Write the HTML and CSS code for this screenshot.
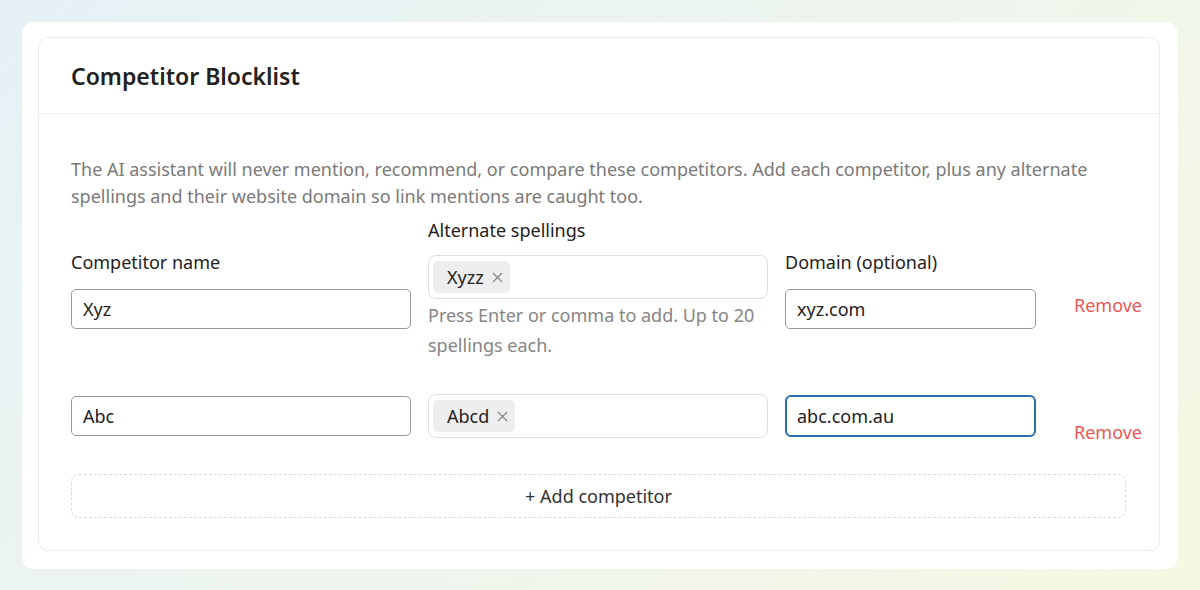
FILE: index.html
```html
<!DOCTYPE html>
<html lang="en">
<head>
    <meta charset="UTF-8">
    <meta name="viewport" content="width=device-width, initial-scale=1.0">
    <title>Competitor Blocklist</title>
    <link rel="stylesheet" href="styles.css">
</head>
<body>
    <div class="panel">
        <div class="card">
            <div class="card-header">
                <h2>Competitor Blocklist</h2>
            </div>

            <div class="card-body">
                <p class="intro">The AI assistant will never mention, recommend, or compare these competitors. Add each competitor, plus any alternate spellings and their website domain so link mentions are caught too.</p>

                <!-- Competitor rows -->
                <div class="comp-row">
                    <div class="field name-field">
                        <label>Competitor name</label>
                        <input class="text-input" type="text" value="Xyz">
                    </div>
                    <div class="field spell-field">
                        <label>Alternate spellings</label>
                        <div class="tag-box">
                            <span class="tag">Xyzz
                                <svg class="tag-x" width="11" height="11" viewBox="0 0 11 11"><path d="M1 1L10 10M10 1L1 10"/></svg>
                            </span>
                        </div>
                        <div class="hint">Press Enter or comma to add. Up to 20 spellings each.</div>
                    </div>
                    <div class="field domain-field">
                        <label>Domain (optional)</label>
                        <input class="text-input" type="text" value="xyz.com">
                    </div>
                    <button class="remove-btn">Remove</button>
                </div>

                <div class="comp-row">
                    <div class="field name-field">
                        <input class="text-input" type="text" value="Abc">
                    </div>
                    <div class="field spell-field">
                        <div class="tag-box">
                            <span class="tag">Abcd
                                <svg class="tag-x" width="11" height="11" viewBox="0 0 11 11"><path d="M1 1L10 10M10 1L1 10"/></svg>
                            </span>
                        </div>
                    </div>
                    <div class="field domain-field">
                        <input class="text-input focused" type="text" value="abc.com.au">
                    </div>
                    <button class="remove-btn">Remove</button>
                </div>

                <button class="add-btn">+ Add competitor</button>
            </div>
        </div>
    </div>
</body>
</html>
```

FILE: styles.css
```css
* {
    box-sizing: border-box;
}

body {
    margin: 0;
    padding: 22px;
    font-family: "Noto Sans", "Open Sans", sans-serif;
    color: #222;
    background: linear-gradient(135deg, #e5f1f6 0%, #eef5ee 50%, #f7f8e3 100%);
    height: 590px;
    overflow: hidden;
}

.panel {
    background: #fff;
    border-radius: 12px;
    padding: 15px 18px 18px 16px;
}

.card {
    border: 1px solid #ececec;
    border-radius: 10px;
}

.card-header {
    height: 76px;
    display: flex;
    align-items: center;
    padding: 0 32px;
    border-bottom: 1px solid #efefef;
}

.card-header h2 {
    margin: 0;
    font-size: 23px;
    font-weight: 600;
    color: #222;
}

.card-body {
    padding: 42px 33px 32px 32px;
}

.intro {
    margin: 0 0 8px;
    font-size: 18px;
    line-height: 27px;
    color: #7a7a7a;
}

.comp-row {
    display: flex;
    align-items: center;
    gap: 17px;
    margin-right: -16px;
    margin-bottom: 34px;
}

.field {
    display: flex;
    flex-direction: column;
}

.field label {
    font-size: 18px;
    line-height: 24px;
    margin-bottom: 13px;
    color: #222;
}

.name-field label,
.domain-field label {
    margin-bottom: 15px;
}

.name-field,
.spell-field {
    width: 340px;
}

.domain-field {
    width: 251px;
}

.text-input {
    height: 40px;
    width: 100%;
    border: 1px solid #9a9a9a;
    border-radius: 5px;
    padding: 0 11px;
    font-family: inherit;
    font-size: 18px;
    color: #222;
    outline: none;
}

.text-input.focused {
    border: 2px solid #2f6eaa;
    border-radius: 6px;
    padding: 0 10px;
    height: 42px;
}

.tag-box {
    height: 44px;
    border: 1px solid #dedede;
    border-radius: 8px;
    padding: 5px 4px;
    display: flex;
    align-items: center;
}

.tag {
    display: inline-flex;
    align-items: center;
    height: 32px;
    padding: 0 7px 0 14px;
    background: #eeeeee;
    border-radius: 5px;
    font-size: 18px;
    color: #222;
}

.tag-x {
    margin-left: 8px;
    stroke: #8a8a8a;
    stroke-width: 1.3;
    fill: none;
}

.hint {
    margin-top: 1px;
    font-size: 18px;
    line-height: 30px;
    color: #858585;
}

.remove-btn {
    margin-left: auto;
    padding: 0;
    border: none;
    background: none;
    font-family: inherit;
    font-size: 18px;
    color: #ec5656;
    cursor: pointer;
    transform: translateY(16px);
}

.add-btn {
    display: block;
    width: 100%;
    height: 44px;
    margin-top: 36px;
    border: 1px dashed #dcdcdc;
    border-radius: 8px;
    background: #fff;
    font-family: inherit;
    font-size: 18px;
    color: #333;
    cursor: pointer;
}
```
